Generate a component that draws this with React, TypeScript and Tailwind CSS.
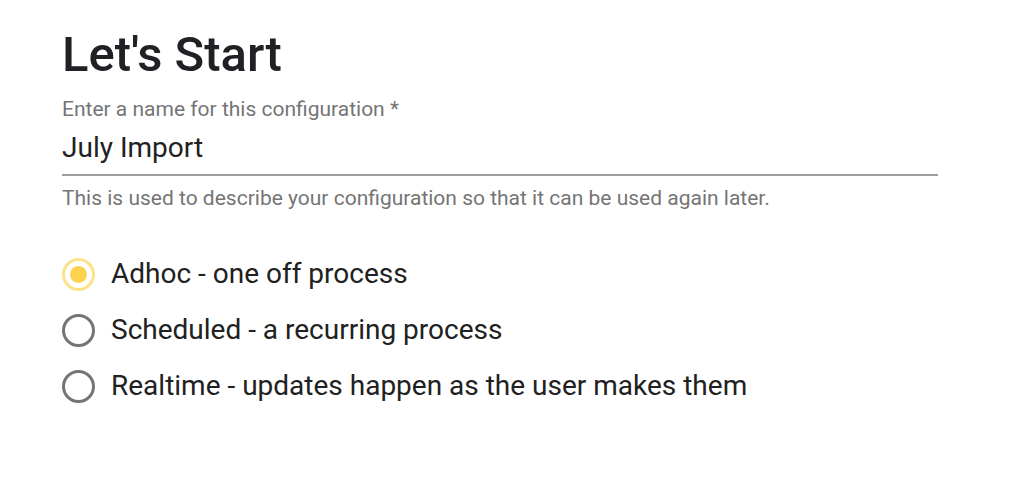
import { useState } from 'react';

const options = [
  { id: 'adhoc', label: 'Adhoc - one off process' },
  { id: 'scheduled', label: 'Scheduled - a recurring process' },
  { id: 'realtime', label: 'Realtime - updates happen as the user makes them' },
];

export default function App() {
  const [mode, setMode] = useState('adhoc');
  const [name, setName] = useState('July Import');

  return (
    <div className="w-[1024px] h-[494px] bg-white font-['Roboto',sans-serif] text-[#212121] pl-[62px] pt-[27px]">
      <h1 className="text-[49px] leading-[56px] font-medium text-[#202124]">Let's Start</h1>

      {/* Name field */}
      <div className="w-[876px] mt-[14px]">
        <label className="block text-[21px] leading-[24px] text-[#757575]">
          Enter a name for this configuration *
        </label>
        <input
          value={name}
          onChange={(e) => setName(e.target.value)}
          className="block w-full mt-[11px] pb-[10px] text-[28px] leading-[32px] text-[#212121] bg-transparent outline-none border-b-2 border-[#9e9e9e]"
        />
        <p className="mt-[10px] text-[21px] leading-[24px] text-[#757575]">
          This is used to describe your configuration so that it can be used again later.
        </p>
      </div>

      {/* Mode radios */}
      <div className="mt-[47px] flex flex-col gap-[22px]">
        {options.map((o) => {
          const on = mode === o.id;
          return (
            <label key={o.id} className="flex items-center gap-[16px] cursor-pointer" onClick={() => setMode(o.id)}>
              <span
                className={`w-[33px] h-[33px] rounded-full border-[3px] flex items-center justify-center ${
                  on ? 'border-[#fce38a]' : 'border-[#757575]'
                }`}
              >
                {on && <span className="w-[17px] h-[17px] rounded-full bg-[#fdd24e]" />}
              </span>
              <span className="text-[28px] leading-[34px]">{o.label}</span>
            </label>
          );
        })}
      </div>
    </div>
  );
}
